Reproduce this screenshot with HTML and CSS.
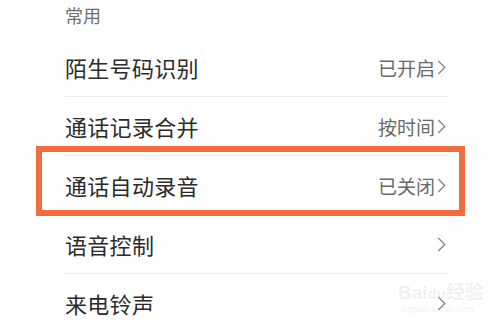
FILE: index.html
```html
<!DOCTYPE html>
<html lang="zh-CN">
<head>
<meta charset="utf-8">
<link rel="stylesheet" href="styles.css">
</head>
<body>
<div class="screen">
  <div class="section-title">常用</div>
  <div class="list">
    <div class="row">
      <span class="label">陌生号码识别</span>
      <span class="value">已开启<svg class="chev" viewBox="0 0 8 14"><polyline points="1,1 7,7 1,13"/></svg></span>
    </div>
    <div class="row">
      <span class="label">通话记录合并</span>
      <span class="value">按时间<svg class="chev" viewBox="0 0 8 14"><polyline points="1,1 7,7 1,13"/></svg></span>
    </div>
    <div class="row">
      <span class="label">通话自动录音</span>
      <span class="value">已关闭<svg class="chev" viewBox="0 0 8 14"><polyline points="1,1 7,7 1,13"/></svg></span>
    </div>
    <div class="row">
      <span class="label">语音控制</span>
      <span class="value"><svg class="chev" viewBox="0 0 8 14"><polyline points="1,1 7,7 1,13"/></svg></span>
    </div>
    <div class="row">
      <span class="label">来电铃声</span>
      <span class="value"><svg class="chev" viewBox="0 0 8 14"><polyline points="1,1 7,7 1,13"/></svg></span>
    </div>
  </div>
  <div class="highlight"></div>
  <div class="watermark"><span class="wm-brand">Bai<span class="wm-du">du</span>经验</span><span class="wm-url">jingyan.baidu.com</span></div>
</div>
</body>
</html>
```
FILE: styles.css
```css
html, body {
  margin: 0;
  padding: 0;
  background: #ffffff;
}
.screen {
  position: relative;
  width: 500px;
  height: 329px;
  overflow: hidden;
  font-family: "Noto Sans CJK SC", "Noto Sans", sans-serif;
  background: #ffffff;
}
.section-title {
  height: 38px;
  box-sizing: border-box;
  padding: 2px 0 0 65px;
  font-size: 18px;
  line-height: 26px;
  color: #6e6e6e;
}
.list {
  display: flex;
  flex-direction: column;
  margin-left: 65px;
  margin-right: 52px;
}
.row {
  display: flex;
  align-items: center;
  justify-content: space-between;
  height: 58px;
  border-bottom: 1px solid #ebebeb;
}
.label {
  font-size: 22px;
  color: #2b2b2b;
  letter-spacing: 0.3px;
}
.value {
  display: flex;
  align-items: center;
  font-size: 19px;
  color: #6a6a6a;
  margin-right: 2px;
}
.chev {
  width: 9px;
  height: 15px;
  margin-left: 2px;
  fill: none;
  stroke: #888888;
  stroke-width: 1.3;
}
.highlight {
  position: absolute;
  left: 36px;
  top: 146px;
  width: 429px;
  height: 70px;
  box-sizing: border-box;
  border: 6px solid #f26c3f;
}
.watermark {
  position: absolute;
  left: 398px;
  top: 283px;
  display: flex;
  flex-direction: column;
  align-items: flex-start;
  color: rgba(190, 190, 190, 0.22);
  font-family: "Liberation Sans", "Noto Sans CJK SC", sans-serif;
}
.wm-brand {
  font-size: 19px;
  line-height: 20px;
  font-weight: bold;
}
.wm-du {
  font-size: 15px;
}
.wm-url {
  font-size: 9px;
  line-height: 10px;
  margin-left: 3px;
}
```
